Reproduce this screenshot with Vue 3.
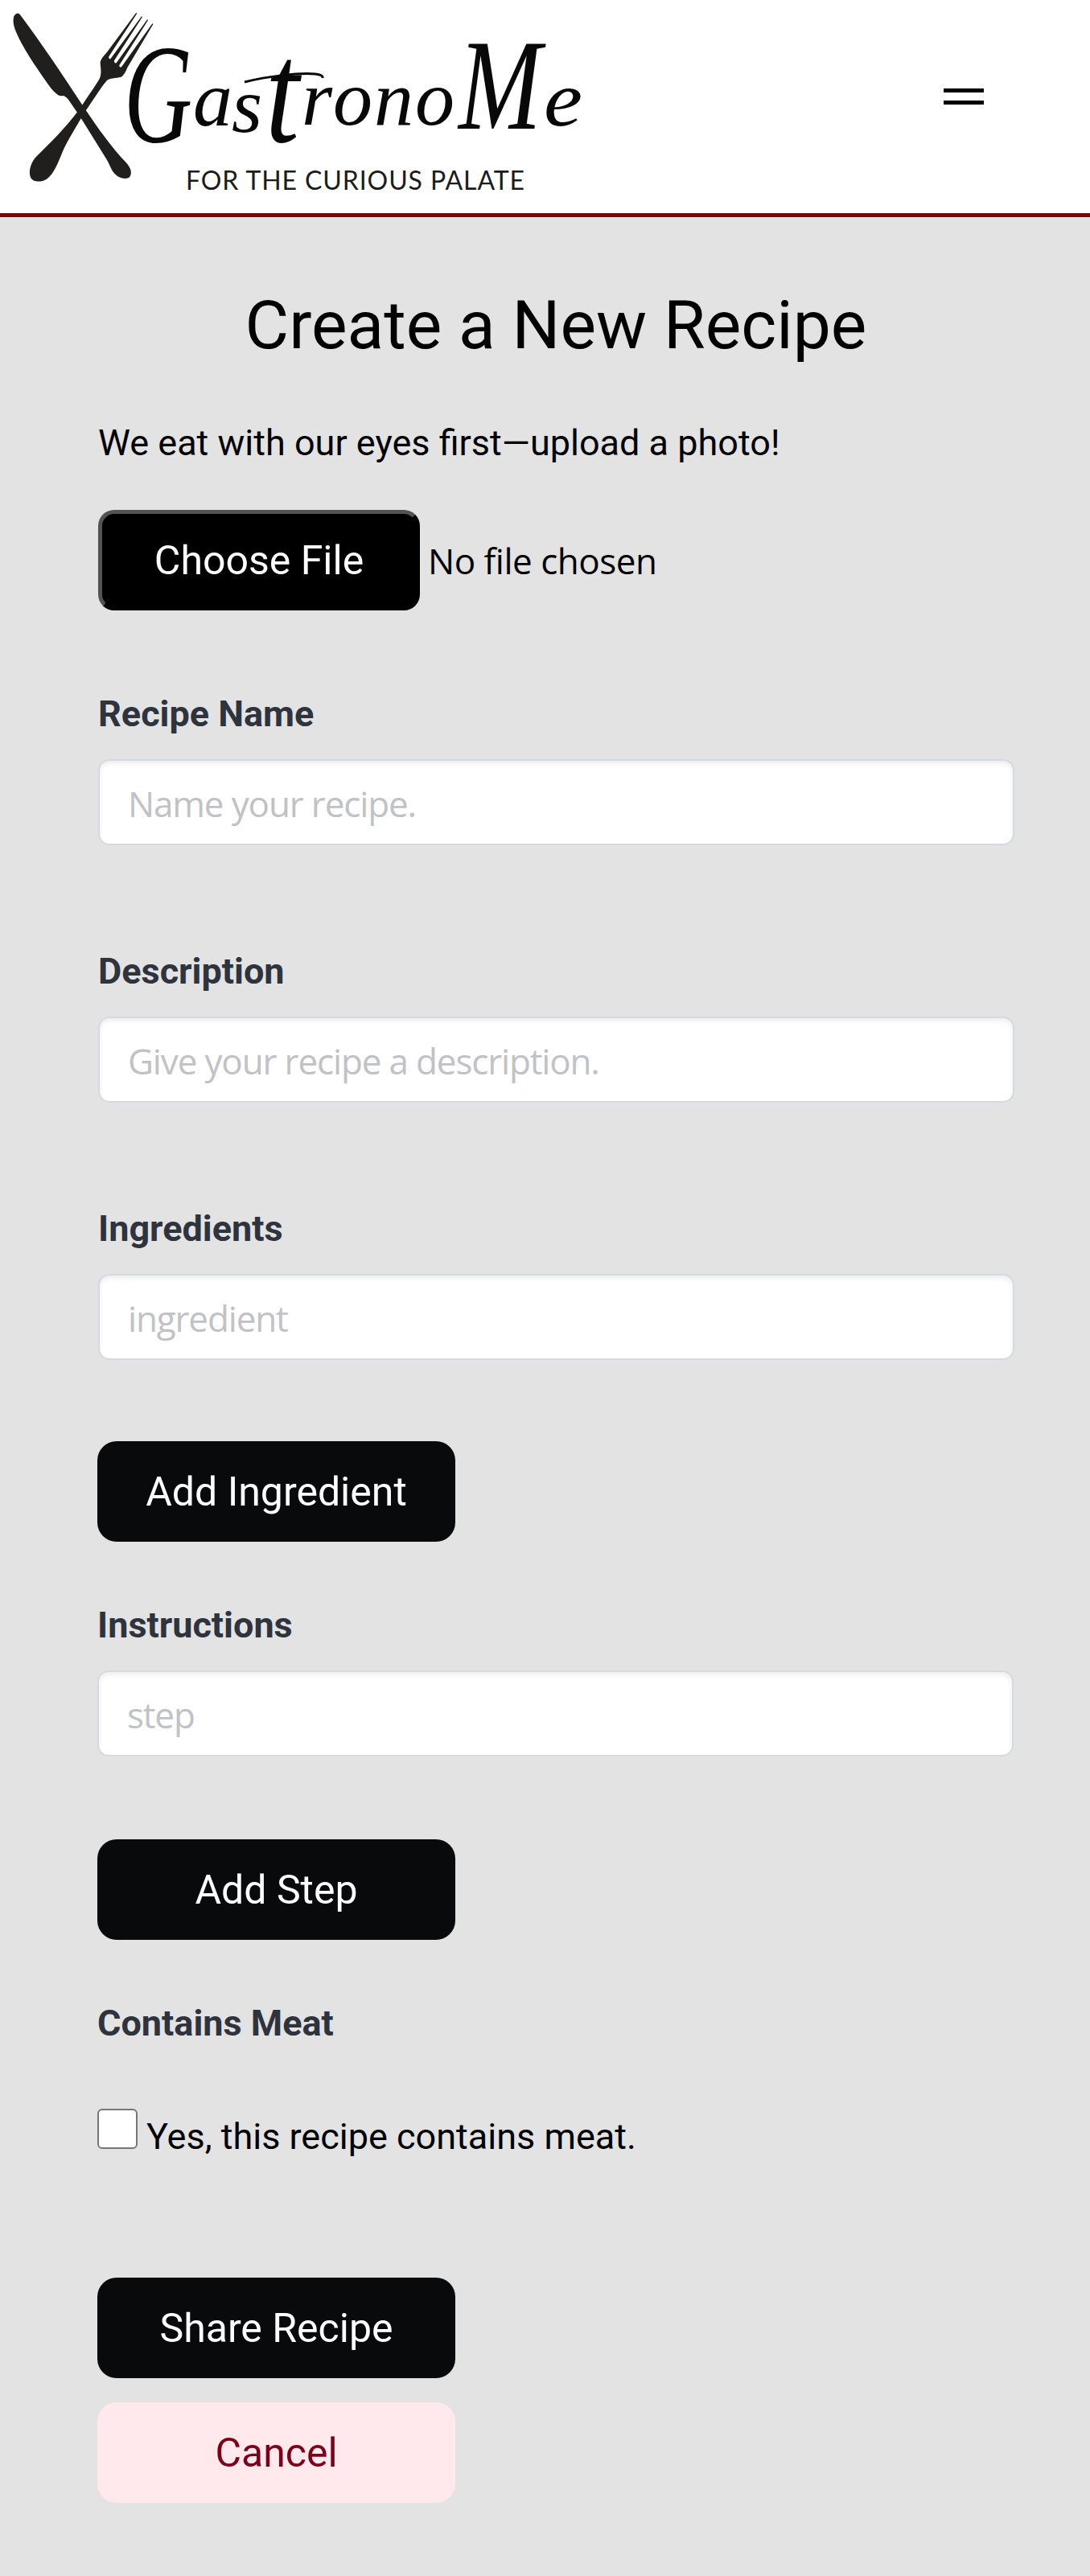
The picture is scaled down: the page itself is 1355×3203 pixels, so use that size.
<script setup>
import { ref } from 'vue'

const recipeName = ref('')
const description = ref('')
const ingredient = ref('')
const step = ref('')
const containsMeat = ref(false)
</script>

<template>
  <div class="page">
    <header class="header">
      <svg class="logo" viewBox="0 0 740 265" width="740" height="265" role="img" aria-label="GastronoMe">
        <g transform="scale(.33333)" fill="#201f1d">
          <path d="M52 60 Q64 41 76 56 C150 155 235 280 318 408 C365 478 420 555 470 606 C492 630 492 648 483 661 C470 671 441 665 425 645 C411 626 407 608 395 590 L299 436 L260 379 Q249 361 237 357 Q225 360 216 354 C196 339 186 324 172 304 C132 246 85 178 63 126 C50 98 47 77 52 60Z" />
          <path d="M508 47 Q512 47 509 53 L406 211 Q404 221 412 220 L528 61 Q532 60 529 66 L426 226 Q425 237 434 235 L549 73 Q554 72 550 79 L445 243 Q444 253 453 250 L568 88 Q572 88 570 92 L475 252 Q465 279 452 287 C431 293 409 289 397 302 C373 330 341 383 321 411 C284 472 253 523 235 562 C218 603 203 648 174 668 C150 683 119 678 113 659 C106 637 116 605 134 586 C188 532 247 475 298 405 C321 371 351 326 369 298 C382 276 374 251 374 232 C379 214 390 206 401 192Z" />
        </g>
        <text class="wordmark" y="156"><tspan x="154" y="176" font-size="176" textLength="85" lengthAdjust="spacingAndGlyphs">G</tspan><tspan x="240 288" y="156 164" font-size="98">as</tspan><tspan x="330" y="176" font-size="180" textLength="42" lengthAdjust="spacingAndGlyphs">t</tspan><tspan x="375 414 465 516" y="155" font-size="98">rono</tspan><tspan x="570" y="160" font-size="160" textLength="103" lengthAdjust="spacingAndGlyphs">M</tspan><tspan x="676" y="156" font-size="98" textLength="48" lengthAdjust="spacingAndGlyphs">e</tspan></text>
        <path d="M304 102 C332 95 372 90 392 92 Q402 93 401 97" fill="none" stroke="#080808" stroke-width="3" />
        <text class="tagline" x="231" y="236" textLength="421">FOR THE CURIOUS PALATE</text>
      </svg>
      <button class="menu" type="button" aria-label="Menu"><span></span><span></span></button>
    </header>

    <main class="content">
      <h1>Create a New Recipe</h1>
      <p class="hint">We eat with our eyes first—upload a photo!</p>
      <div class="file">
        <button class="file-button" type="button">Choose File</button>
        <span class="file-name">No file chosen</span>
      </div>

      <div class="field">
        <label for="name">Recipe Name</label>
        <input id="name" v-model="recipeName" type="text" placeholder="Name your recipe." />
      </div>
      <div class="field">
        <label for="description">Description</label>
        <input id="description" v-model="description" type="text" placeholder="Give your recipe a description." />
      </div>
      <div class="field with-button">
        <label for="ingredient">Ingredients</label>
        <input id="ingredient" v-model="ingredient" type="text" placeholder="ingredient" />
      </div>
      <button class="btn" type="button">Add Ingredient</button>
      <div class="field with-button after-button">
        <label for="step">Instructions</label>
        <input id="step" v-model="step" type="text" placeholder="step" />
      </div>
      <button class="btn" type="button">Add Step</button>

      <div class="group-label">Contains Meat</div>
      <label class="check">
        <input v-model="containsMeat" type="checkbox" />
        <span>Yes, this recipe contains meat.</span>
      </label>

      <div class="actions">
        <button class="btn" type="submit">Share Recipe</button>
        <button class="btn cancel" type="button">Cancel</button>
      </div>
    </main>
  </div>
</template>

<style>
body {
  margin: 0;
  background: #e3e3e3;
}
</style>

<style scoped>
.page {
  box-sizing: border-box;
  min-height: 3203px;
  background: #e3e3e3;
  color: #000;
  font-family: Roboto, sans-serif;
  font-size: 45px;
  line-height: 52px;
}
.header {
  display: flex;
  justify-content: space-between;
  align-items: flex-start;
  height: 265px;
  background: #fff;
  border-bottom: 5px solid #8b0000;
}
.logo {
  display: block;
}
.wordmark {
  font-family: "Liberation Serif", serif;
  font-style: italic;
  fill: #080808;
}
.tagline {
  font-family: Lato, sans-serif;
  font-size: 32px;
  fill: #1c1c1c;
}
.menu {
  display: flex;
  flex-direction: column;
  gap: 10px;
  width: 50px;
  margin: 110px 132px 0 0;
  padding: 0;
  border: 0;
  background: none;
}
.menu span {
  height: 5px;
  background: #000;
}
.content {
  display: flex;
  flex-direction: column;
  align-items: flex-start;
  padding: 85px 94px 0 121px;
}
h1 {
  align-self: stretch;
  margin: 0;
  font-size: 84px;
  font-weight: 400;
  line-height: 100px;
  text-align: center;
}
.hint {
  margin: 70px 0 0 1px;
}
.file {
  display: flex;
  align-items: center;
  gap: 10px;
  margin: 57px 0 0 1px;
}
.file-button {
  box-sizing: border-box;
  width: 400px;
  height: 125px;
  padding: 0;
  border: 5px solid;
  border-color: #535353 #000 #000 #535353;
  border-radius: 20px;
  background: #000;
  color: #fff;
  font: 50px Roboto, sans-serif;
}
.file-name {
  font-family: "Open Sans", "Noto Sans", sans-serif;
  font-size: 44px;
  letter-spacing: -0.5px;
}
.field {
  align-self: stretch;
  display: flex;
  flex-direction: column;
  gap: 30px;
  margin: 0 0 130px 1px;
  padding-top: 1px;
}
.file + .field {
  margin-top: 102px;
}
.field.with-button {
  margin-bottom: 101px;
}
.field.after-button {
  margin: 77px 1px 103px 0;
}
label,
.group-label {
  color: #2e333d;
  font-weight: 700;
}
.field input {
  box-sizing: border-box;
  width: 100%;
  height: 107px;
  padding: 3px 34px 0 35px;
  border: 2px solid #d5d9e0;
  border-radius: 14px;
  background: #fff;
  box-shadow: inset 0 3px 6px rgba(0, 0, 0, 0.08);
  font-family: "Open Sans", "Noto Sans", sans-serif;
  font-size: 44px;
  letter-spacing: -1.15px;
}
.field input::placeholder {
  color: #c0c2c6;
  opacity: 1;
}
.btn {
  width: 445px;
  height: 125px;
  padding: 0;
  border: 0;
  border-radius: 24px;
  background: #090a0c;
  color: #fff;
  font: 50px Roboto, sans-serif;
}
.group-label {
  margin-top: 78px;
}
.check {
  display: flex;
  align-items: flex-start;
  gap: 11px;
  margin-top: 80px;
  color: #000;
  font-weight: 400;
}
.check input {
  appearance: none;
  box-sizing: border-box;
  width: 50px;
  height: 50px;
  margin: 0;
  border: 2px solid #767676;
  border-radius: 6px;
  background: #fff;
}
.check span {
  margin-top: 9px;
}
.actions {
  display: flex;
  flex-direction: column;
  gap: 30px;
  margin-top: 149px;
}
.cancel {
  background: #ffe9ed;
  color: #7d0018;
}
</style>
